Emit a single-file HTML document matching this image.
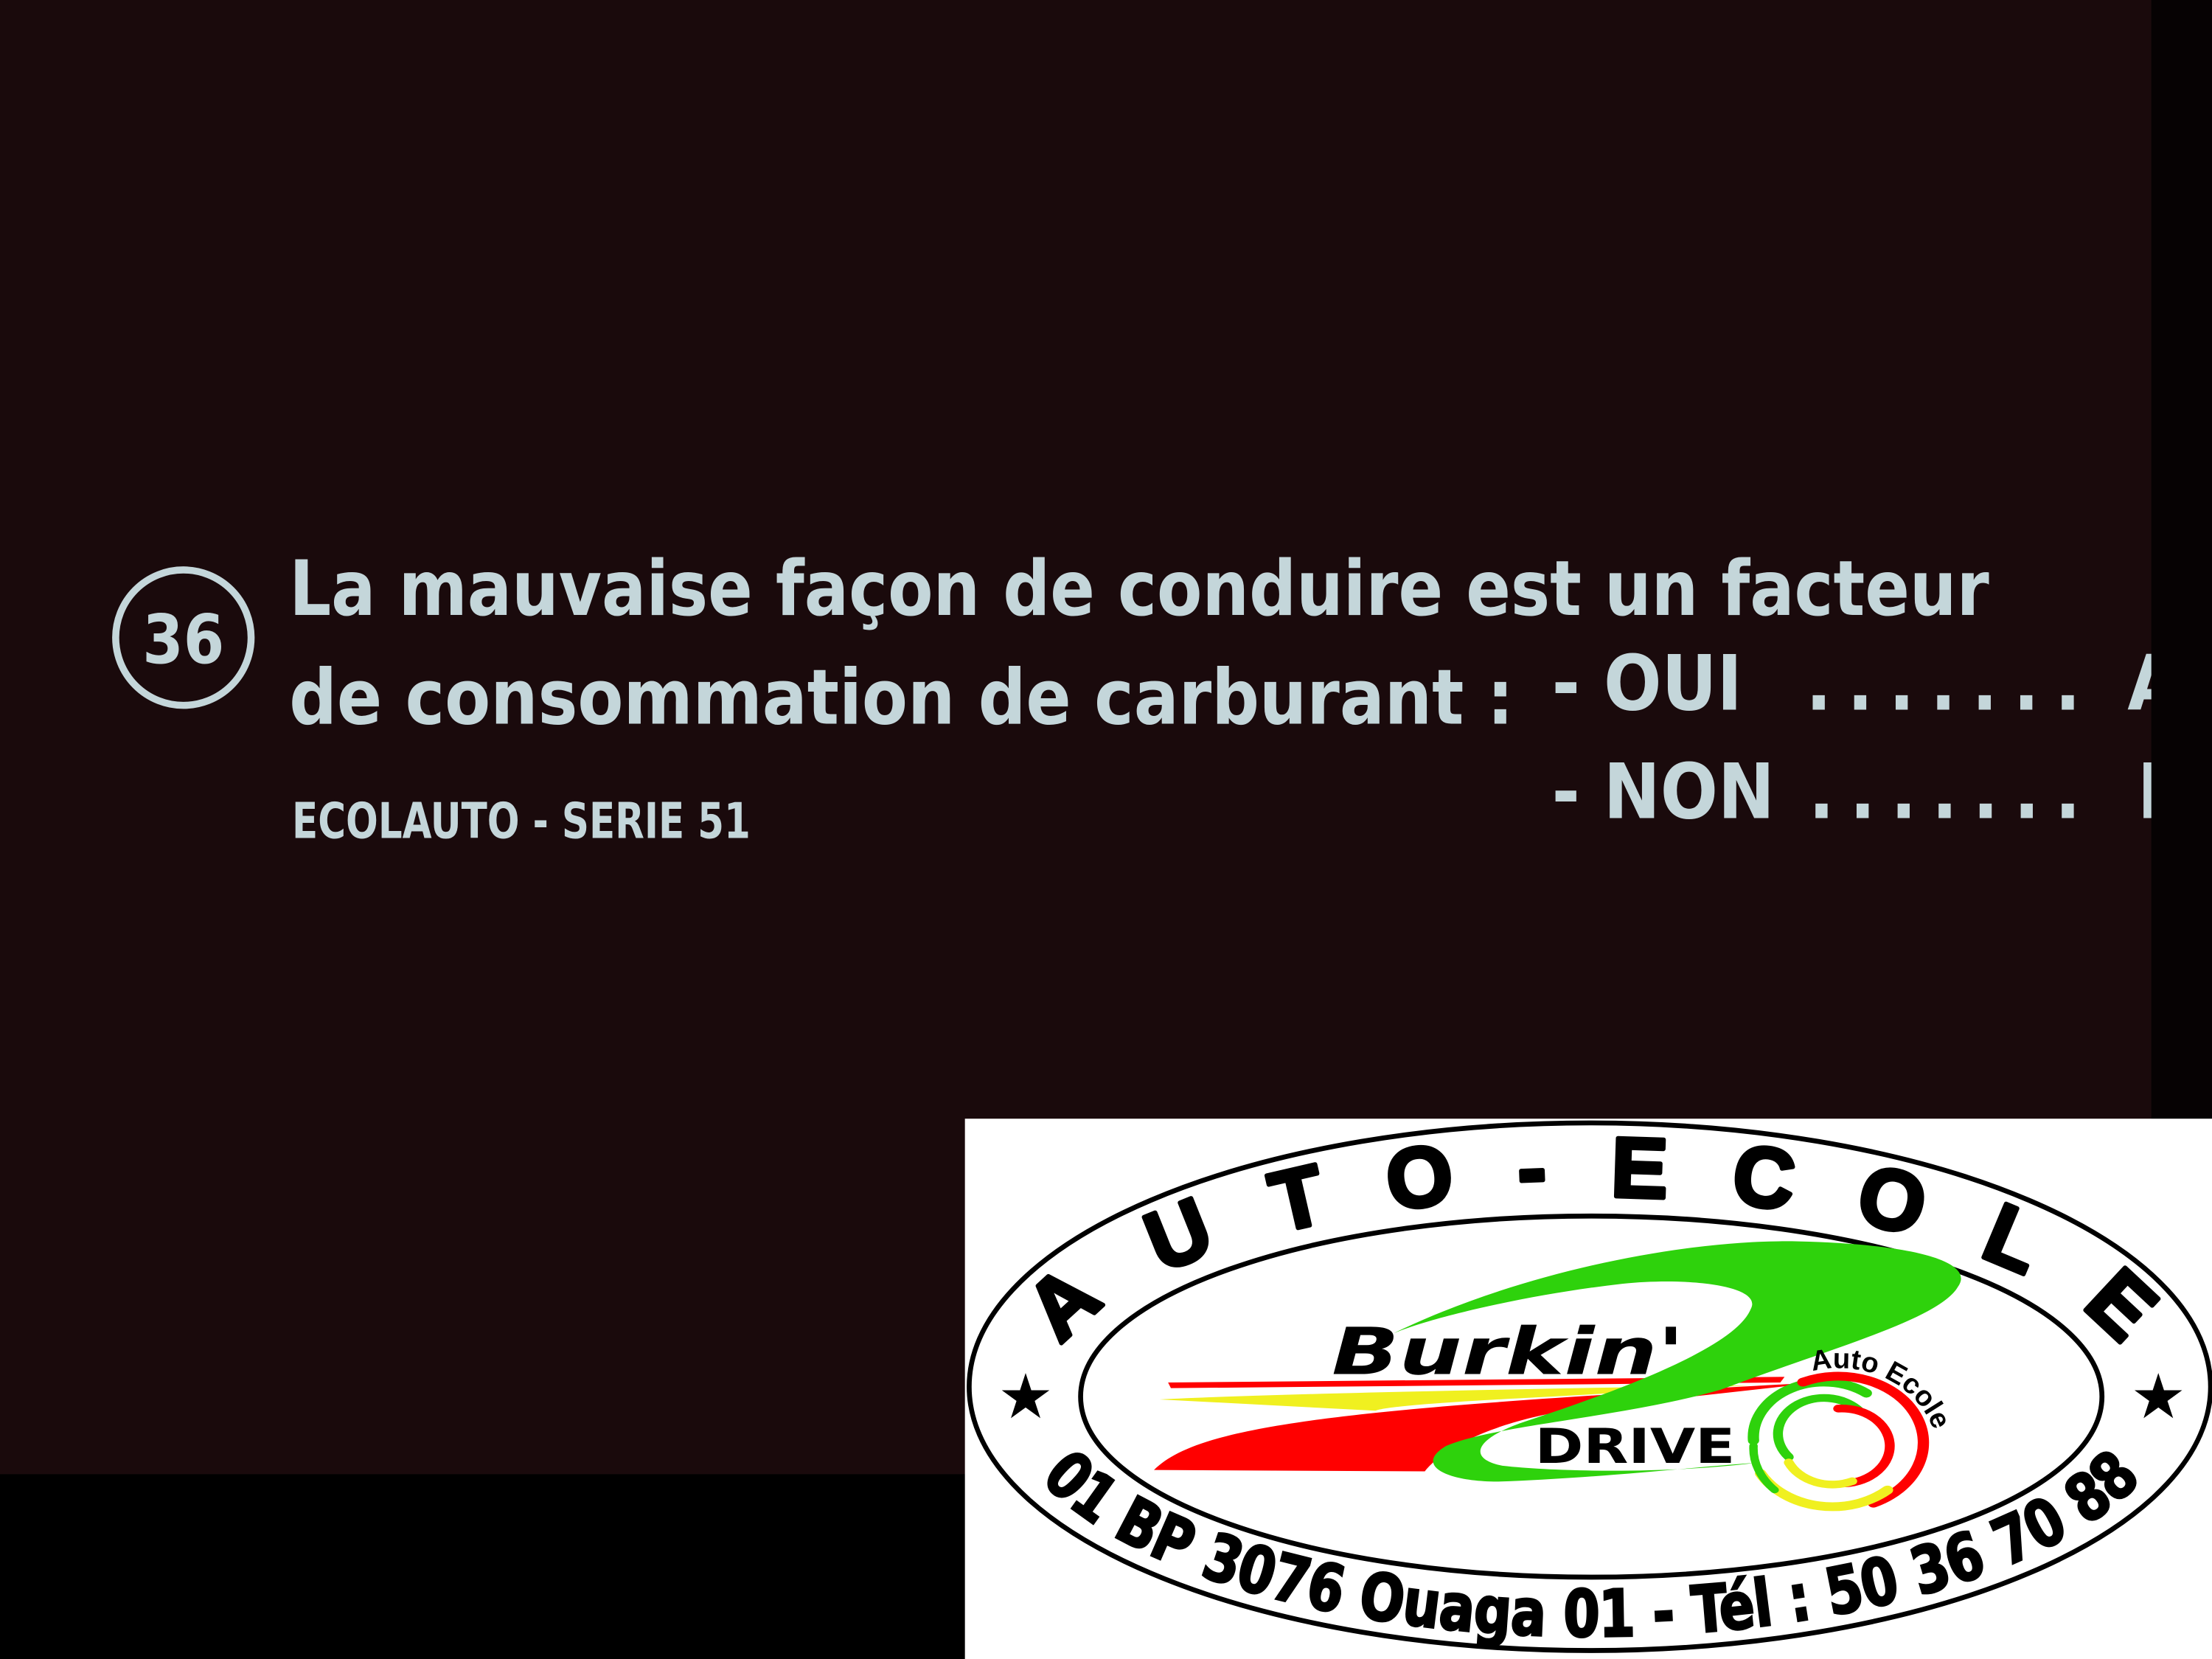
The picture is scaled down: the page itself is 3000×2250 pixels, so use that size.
<!DOCTYPE html>
<html><head><meta charset="utf-8"><style>
html,body{margin:0;padding:0;background:#1b0a0d;}
svg{display:block}
</style></head><body>
<svg xmlns="http://www.w3.org/2000/svg" width="3000" height="2250" viewBox="0 0 1568 1176" preserveAspectRatio="none">
<rect width="1568" height="1176" fill="#1a0a0c"/>
<g fill="#c4d6da" font-family="'DejaVu Sans Condensed','DejaVu Sans',sans-serif" font-weight="bold">
<circle cx="130" cy="452" r="48" fill="none" stroke="#c4d6da" stroke-width="5"/>
<text x="130" y="470" font-size="48" text-anchor="middle" textLength="58" lengthAdjust="spacingAndGlyphs">36</text>
<text x="205" y="436" font-size="54" textLength="1205" lengthAdjust="spacingAndGlyphs">La mauvaise façon de conduire est un facteur</text>
<text x="205" y="513" font-size="54" textLength="868" lengthAdjust="spacingAndGlyphs">de consommation de carburant :</text>
<text x="1100" y="503" font-size="54" textLength="135" lengthAdjust="spacingAndGlyphs">- OUI</text>
<text x="1280" y="503" font-size="54" textLength="195" lengthAdjust="spacing">.......</text>
<text x="1508" y="503" font-size="54">A</text>
<text x="1100" y="580" font-size="54" textLength="158" lengthAdjust="spacingAndGlyphs">- NON</text>
<text x="1282" y="580" font-size="54" textLength="193" lengthAdjust="spacing">.......</text>
<text x="1515" y="580" font-size="54">B</text>
<text x="207" y="594" font-size="35" textLength="325" lengthAdjust="spacingAndGlyphs">ECOLAUTO - SERIE 51</text>
</g>
<rect x="1525" y="0" width="43" height="793" fill="#060203"/>
<rect x="0" y="1045" width="684" height="131" fill="#000"/>
<rect x="684" y="793" width="884" height="383" fill="#fff"/>
<ellipse cx="1127" cy="983" rx="440" ry="187" fill="none" stroke="#000" stroke-width="3.5"/>
<ellipse cx="1128" cy="990" rx="362" ry="128" fill="none" stroke="#000" stroke-width="3.5"/>
<defs>
<path id="top" d="M 738,994 A 390,146 0 0 1 1518,994"/>
<path id="bot" d="M 712,990 A 416,170 0 0 0 1544,990"/>
</defs>
<text font-family="'Liberation Sans',sans-serif" font-weight="bold" font-size="60" fill="#000" stroke="#000" stroke-width="3" stroke-linejoin="round"><textPath href="#top" startOffset="50%" text-anchor="middle" textLength="800" lengthAdjust="spacing">AUTO-ECOLE</textPath></text>
<text font-family="'DejaVu Sans Condensed','DejaVu Sans',sans-serif" font-weight="bold" font-size="46" fill="#000" stroke="#000" stroke-width="1.5"><textPath href="#bot" startOffset="50%" text-anchor="middle" textLength="830" lengthAdjust="spacingAndGlyphs">01 BP 3076 Ouaga 01 - Tél : 50 36 70 88</textPath></text>
<text x="727" y="1005" font-size="44" text-anchor="middle" fill="#000" font-family="'DejaVu Sans',sans-serif">★</text>
<text x="1530" y="1005" font-size="44" text-anchor="middle" fill="#000" font-family="'DejaVu Sans',sans-serif">★</text>
<!-- streaks -->
<path d="M 828,980 L 1265,976 L 1262,980 L 830,984 Z" fill="#f00"/>
<path d="M 822,992 C 900,988 1100,984 1240,982 L 1100,990 C 1000,995 980,998 975,1000 Z" fill="#f0f020"/>
<path d="M 818,1042 C 850,1010 950,998 1289,980 L 1110,1000 C 1050,1010 1020,1030 1010,1043 Z" fill="#f00"/>
<!-- green swoosh -->
<path d="M 986,946 C 1080,900 1200,878 1275,880 C 1360,882 1400,895 1388,912 C 1375,935 1300,955 1220,985 C 1150,1005 1060,1010 1025,1025 C 1000,1040 1030,1052 1070,1050 C 1140,1047 1200,1040 1244,1037 C 1190,1044 1110,1044 1065,1039 C 1040,1034 1045,1020 1080,1008 C 1150,985 1230,955 1241,928 C 1250,912 1200,905 1150,910 C 1080,918 1010,935 986,946 Z" fill="#2ed20c"/>
<text x="944" y="974" font-family="'DejaVu Sans Condensed','DejaVu Sans',sans-serif" font-weight="bold" font-style="italic" font-size="46" fill="#000" textLength="250" lengthAdjust="spacingAndGlyphs">Burkin'</text>
<text x="1088" y="1037" font-family="'DejaVu Sans Condensed','DejaVu Sans',sans-serif" font-weight="bold" font-size="34" fill="#000" textLength="142" lengthAdjust="spacingAndGlyphs">DRIVE</text>
<!-- spiral -->
<g fill="none" stroke-linecap="round" transform="translate(1298,1025) scale(1,0.78)">
<path d="M -55,-5 A 50,50 0 0 1 25,-48" stroke="#2ed20c" stroke-width="8"/>
<path d="M -20,-58 A 58,58 0 0 1 30,52" stroke="#f00" stroke-width="8"/>
<path d="M 40,40 A 58,58 0 0 1 -50,25" stroke="#f0f020" stroke-width="8"/>
<path d="M -30,10 A 32,32 0 0 1 20,-32" stroke="#2ed20c" stroke-width="7"/>
<path d="M 5,-34 A 34,34 0 0 1 10,34" stroke="#f00" stroke-width="7"/>
<path d="M 15,32 A 34,34 0 0 1 -30,15" stroke="#f0f020" stroke-width="7"/>
<path d="M -55,0 A 55,55 0 0 0 -40,40" stroke="#2ed20c" stroke-width="6"/>
</g>
<defs><path id="sp" d="M 1285,972 A 70,62 0 0 1 1372,1045"/></defs>
<text font-family="'Liberation Sans',sans-serif" font-weight="bold" font-size="20" fill="#000"><textPath href="#sp">Auto Ecole</textPath></text>
</svg>
</body></html>
